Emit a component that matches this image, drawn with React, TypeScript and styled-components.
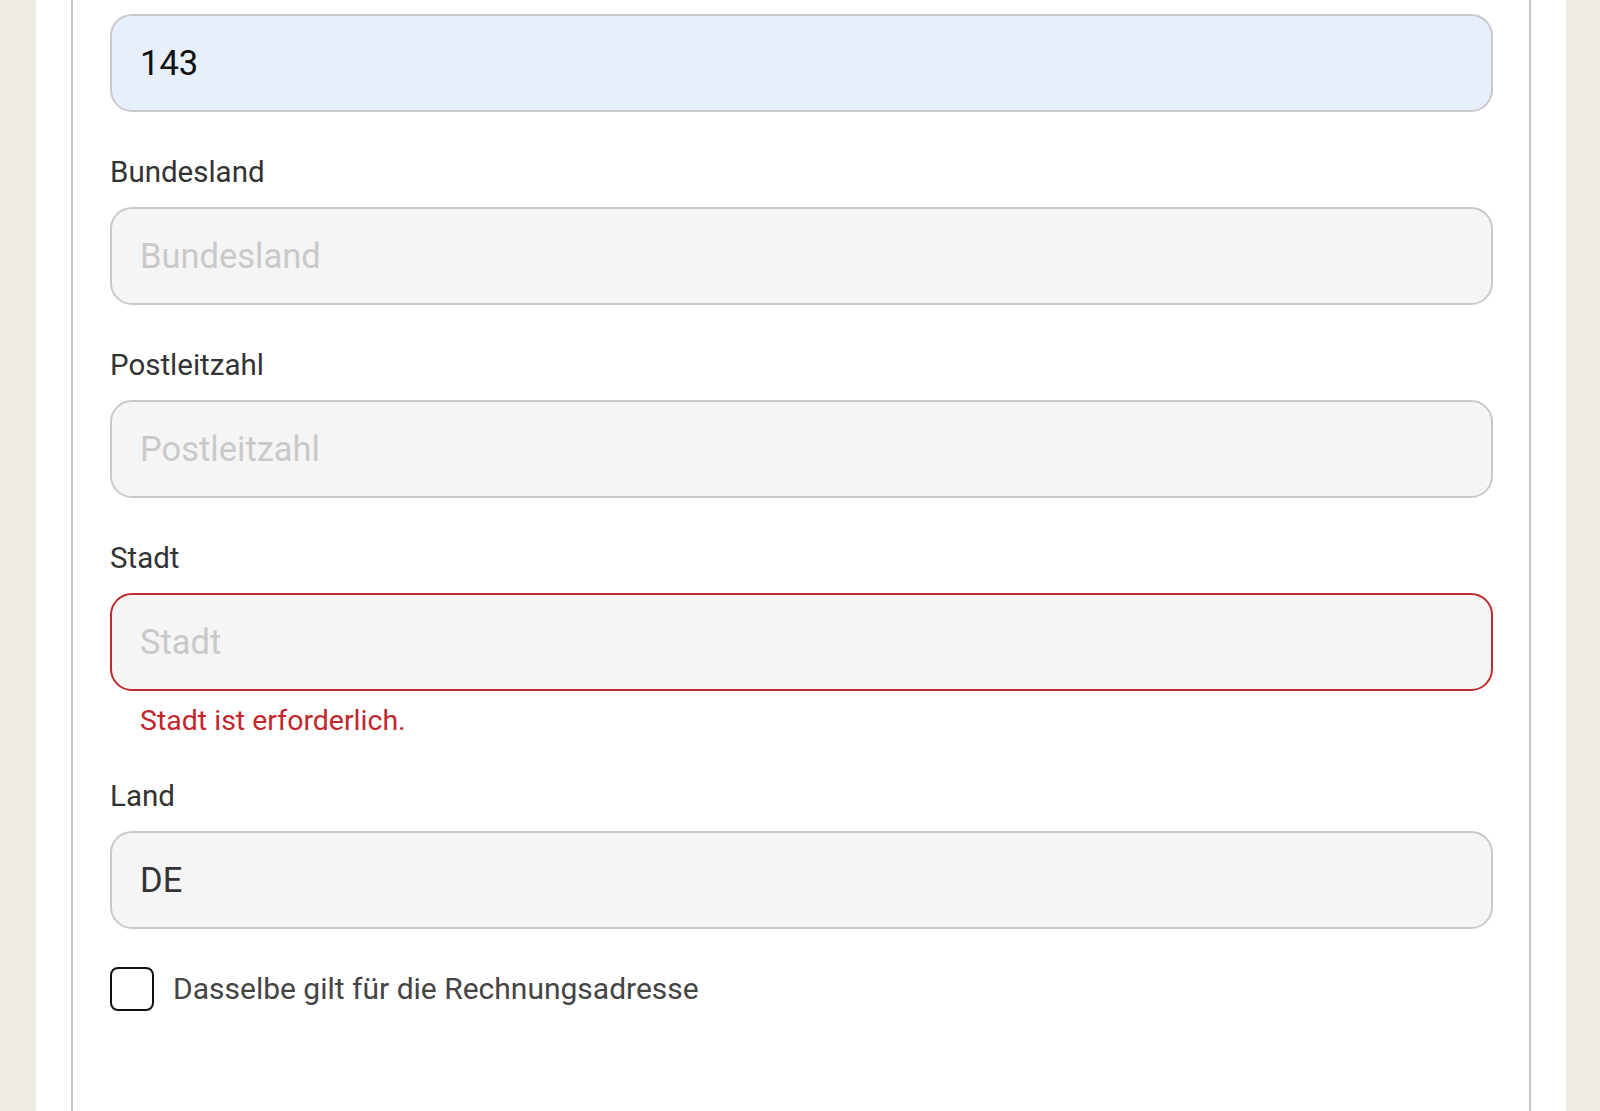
import styled, { createGlobalStyle } from "styled-components";

const GlobalStyle = createGlobalStyle`
  html, body {
    margin: 0;
    padding: 0;
    background: #efebe5;
    overflow: hidden;
  }
  * {
    box-sizing: border-box;
  }
`;

type FieldProps = {
  label: string;
  placeholder: string;
  value?: string;
  autofilled?: boolean;
  error?: string;
};

const Field = ({ label, placeholder, value, autofilled, error }: FieldProps) => {
  return (
    <StyledField>
      <Label>{label}</Label>
      <Input
        type="text"
        placeholder={placeholder}
        defaultValue={value}
        $autofilled={autofilled}
        $invalid={!!error}
      />
      {error && <ErrorText>{error}</ErrorText>}
    </StyledField>
  );
};

const App = () => {
  return (
    <>
      <GlobalStyle />
      <Page>
        <Card>
          <Input type="text" defaultValue="143" $autofilled />
          <Field label="Bundesland" placeholder="Bundesland" />
          <Field label="Postleitzahl" placeholder="Postleitzahl" />
          <Field
            label="Stadt"
            placeholder="Stadt"
            error="Stadt ist erforderlich."
          />
          <Field label="Land" placeholder="Land" value="DE" />
          <CheckRow>
            <Checkbox type="checkbox" id="same-billing" />
            <CheckLabel htmlFor="same-billing">
              Dasselbe gilt für die Rechnungsadresse
            </CheckLabel>
          </CheckRow>
        </Card>
      </Page>
    </>
  );
};

const Page = styled.div`
  margin: 0 34px 0 36px;
  padding: 0 35px;
  background: #ffffff;
  min-height: 100vh;
  font-family: Roboto, "Noto Sans", sans-serif;
`;

const Card = styled.div`
  border-left: 2px solid #c8c8c8;
  border-right: 2px solid #c8c8c8;
  padding: 14px 36px 140px 37px;
  display: flex;
  flex-direction: column;
`;

const StyledField = styled.div`
  display: flex;
  flex-direction: column;
  margin-top: 42px;
`;

const Label = styled.label`
  font-size: 29.5px;
  line-height: 36px;
  color: #333333;
  margin-bottom: 17px;
`;

const Input = styled.input<{ $autofilled?: boolean; $invalid?: boolean }>`
  width: 100%;
  height: 98px;
  padding: 0 28px;
  border-radius: 22px;
  border: 2px solid ${(p) => (p.$invalid ? "#bd2a30" : "#c9c9c9")};
  background: ${(p) => (p.$autofilled ? "#e8effc" : "#f5f5f5")};
  font-family: Roboto, "Noto Sans", sans-serif;
  font-size: 34.5px;
  color: ${(p) => (p.$autofilled ? "#111111" : "#333333")};
  outline: none;

  &::placeholder {
    color: #c9c9c9;
  }
`;

const ErrorText = styled.div`
  margin-top: 15px;
  padding-left: 30px;
  font-size: 28.5px;
  line-height: 30px;
  color: #c3262d;
`;

const CheckRow = styled.div`
  display: flex;
  align-items: center;
  gap: 19px;
  margin-top: 38px;
`;

const Checkbox = styled.input`
  appearance: none;
  margin: 0;
  width: 44px;
  height: 44px;
  border: 2px solid #111111;
  border-radius: 8px;
  background: #ffffff;
  cursor: pointer;
`;

const CheckLabel = styled.label`
  font-size: 30px;
  line-height: 36px;
  color: #444444;
  cursor: pointer;
`;

export default App;
